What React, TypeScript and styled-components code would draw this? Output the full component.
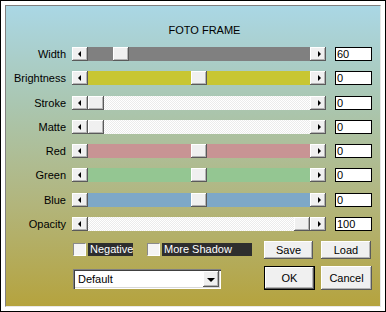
import React from "react";
import styled, { createGlobalStyle, css } from "styled-components";

const GlobalStyle = createGlobalStyle`
  html, body { margin: 0; padding: 0; background: #fff; }
  body { font-family: "Liberation Sans", Arial, sans-serif; font-size: 11px; color: #000; }
  * { box-sizing: border-box; }
`;

const raised = css`
  background: #f0f0f0;
  box-shadow: inset -1px -1px 0 #5a5a5a, inset 1px 1px 0 #ffffff, inset -2px -2px 0 #b4b4b4;
`;

const Frame = styled.div`
  width: 386px;
  height: 312px;
  border: 1px solid #000;
  background: #fff;
  padding: 4px;
`;

const Panel = styled.div`
  height: 100%;
  border-top: 1px solid #808080;
  border-left: 1px solid #808080;
  border-right: 1px solid #e8e8e8;
  border-bottom: 1px solid #e8e8e8;
  background: linear-gradient(180deg, #aad7e5 0%, #aac6b0 33%, #b2b57c 66%, #b5a33e 100%);
  display: flex;
  flex-direction: column;
`;

const Title = styled.div`
  margin-top: 18px;
  height: 13px;
  line-height: 13px;
  padding-left: 23px;
  text-align: center;
`;

const Rows = styled.div`
  margin-top: 10px;
  display: flex;
  flex-direction: column;
  gap: 10.3px;
`;

const Row = styled.div`
  display: flex;
  align-items: center;
  height: 14px;
`;

const Label = styled.div`
  width: 60px;
  text-align: right;
  line-height: 14px;
`;

const Slider = styled.div`
  margin-left: 6px;
  width: 254px;
  height: 14px;
  display: flex;
`;

const ArrowButton = styled.div`
  ${raised};
  width: 16px;
  height: 14px;
  flex: none;
  display: flex;
  align-items: center;
  justify-content: center;
`;

const Arrow = styled.span<{ $dir: "left" | "right" | "down" }>`
  width: 0;
  height: 0;
  ${(p) =>
    p.$dir === "left"
      ? css`border-top: 3px solid transparent; border-bottom: 3px solid transparent; border-right: 3px solid #000; margin-right: 2px;`
      : p.$dir === "right"
      ? css`border-top: 3px solid transparent; border-bottom: 3px solid transparent; border-left: 3px solid #000; margin-left: 2px;`
      : css`border-left: 4px solid transparent; border-right: 4px solid transparent; border-top: 4px solid #000; margin-top: 1px;`}
`;

const Track = styled.div<{ $fill: string; $dither?: boolean }>`
  position: relative;
  flex: 1;
  height: 14px;
  background: ${(p) =>
    p.$dither ? "repeating-conic-gradient(#ffffff 0 25%, #ebebeb 0 50%) 0 0 / 2px 2px" : p.$fill};
`;

const Thumb = styled.div`
  ${raised};
  position: absolute;
  top: 0;
  width: 16px;
  height: 14px;
`;

const ValueBox = styled.div`
  margin-left: 9px;
  width: 37px;
  height: 14px;
  background: #fff;
  border: 1px solid #000;
  padding-left: 1px;
  line-height: 12px;
`;

const Bottom = styled.div`
  margin-top: 10px;
  display: flex;
  padding-left: 67px;
`;

const LeftCol = styled.div`
  width: 191px;
  padding-top: 2px;
  display: flex;
  flex-direction: column;
  gap: 13px;
`;

const CheckRow = styled.div`
  display: flex;
  align-items: center;
  height: 13px;
`;

const CheckBox = styled.div<{ $gap?: number }>`
  width: 13px;
  height: 13px;
  margin-left: ${(p) => p.$gap ?? 0}px;
  background: #f4f4f4;
  border-top: 1px solid #8a8a8a;
  border-left: 1px solid #8a8a8a;
  border-right: 1px solid #ffffff;
  border-bottom: 1px solid #ffffff;
`;

const CheckLabel = styled.div<{ $w: number }>`
  margin-left: 2px;
  width: ${(p) => p.$w}px;
  height: 13px;
  line-height: 13px;
  padding-left: 2px;
  background: #2e2e2e;
  color: #fff;
`;

const Select = styled.div`
  width: 148px;
  height: 20px;
  background: #fff;
  box-shadow: inset 1px 1px 0 #808080, inset 2px 2px 0 #404040, inset -1px -1px 0 #ffffff, inset -2px -2px 0 #d8d8d8;
  display: flex;
  align-items: center;
  padding: 2px;
`;

const SelectText = styled.div`
  flex: 1;
  padding-left: 3px;
  line-height: 16px;
`;

const SelectButton = styled.div`
  ${raised};
  width: 16px;
  height: 16px;
  display: flex;
  align-items: center;
  justify-content: center;
`;

const RightCol = styled.div`
  display: flex;
  flex-direction: column;
  gap: 7px;
`;

const ButtonRow = styled.div<{ $gap: number }>`
  display: flex;
  gap: ${(p) => p.$gap}px;
`;

const Button = styled.div<{ $w: number; $h: number; $default?: boolean }>`
  ${raised};
  width: ${(p) => p.$w}px;
  height: ${(p) => p.$h}px;
  display: flex;
  align-items: center;
  justify-content: center;
  font-size: 11px;
  ${(p) =>
    p.$default &&
    css`
      border: 1px solid #000;
    `}
`;

type SliderDef = { label: string; value: string; fill: string; dither?: boolean; pos: number };

const sliders: SliderDef[] = [
  { label: "Width", value: "60", fill: "#808080", pos: 0.12 },
  { label: "Brightness", value: "0", fill: "#c8c632", pos: 0.5 },
  { label: "Stroke", value: "0", fill: "#f6f6f6", dither: true, pos: 0 },
  { label: "Matte", value: "0", fill: "#f6f6f6", dither: true, pos: 0 },
  { label: "Red", value: "0", fill: "#c89494", pos: 0.5 },
  { label: "Green", value: "0", fill: "#94c692", pos: 0.5 },
  { label: "Blue", value: "0", fill: "#7ea8c8", pos: 0.5 },
  { label: "Opacity", value: "100", fill: "#f6f6f6", dither: true, pos: 1 },
];

const TRACK_W = 222;
const THUMB_W = 16;

export default function App() {
  return (
    <>
      <GlobalStyle />
      <Frame>
        <Panel>
          <Title>FOTO FRAME</Title>
          <Rows>
            {sliders.map((s) => (
              <Row key={s.label}>
                <Label>{s.label}</Label>
                <Slider>
                  <ArrowButton>
                    <Arrow $dir="left" />
                  </ArrowButton>
                  <Track $fill={s.fill} $dither={s.dither}>
                    <Thumb style={{ left: Math.round(s.pos * (TRACK_W - THUMB_W)) }} />
                  </Track>
                  <ArrowButton>
                    <Arrow $dir="right" />
                  </ArrowButton>
                </Slider>
                <ValueBox>{s.value}</ValueBox>
              </Row>
            ))}
          </Rows>
          <Bottom>
            <LeftCol>
              <CheckRow>
                <CheckBox />
                <CheckLabel $w={45}>Negative</CheckLabel>
                <CheckBox $gap={14} />
                <CheckLabel $w={90}>More Shadow</CheckLabel>
              </CheckRow>
              <Select>
                <SelectText>Default</SelectText>
                <SelectButton>
                  <Arrow $dir="down" />
                </SelectButton>
              </Select>
            </LeftCol>
            <RightCol>
              <ButtonRow $gap={8}>
                <Button $w={49} $h={18}>Save</Button>
                <Button $w={50} $h={18}>Load</Button>
              </ButtonRow>
              <ButtonRow $gap={6}>
                <Button $w={51} $h={24} $default>OK</Button>
                <Button $w={51} $h={24}>Cancel</Button>
              </ButtonRow>
            </RightCol>
          </Bottom>
        </Panel>
      </Frame>
    </>
  );
}
